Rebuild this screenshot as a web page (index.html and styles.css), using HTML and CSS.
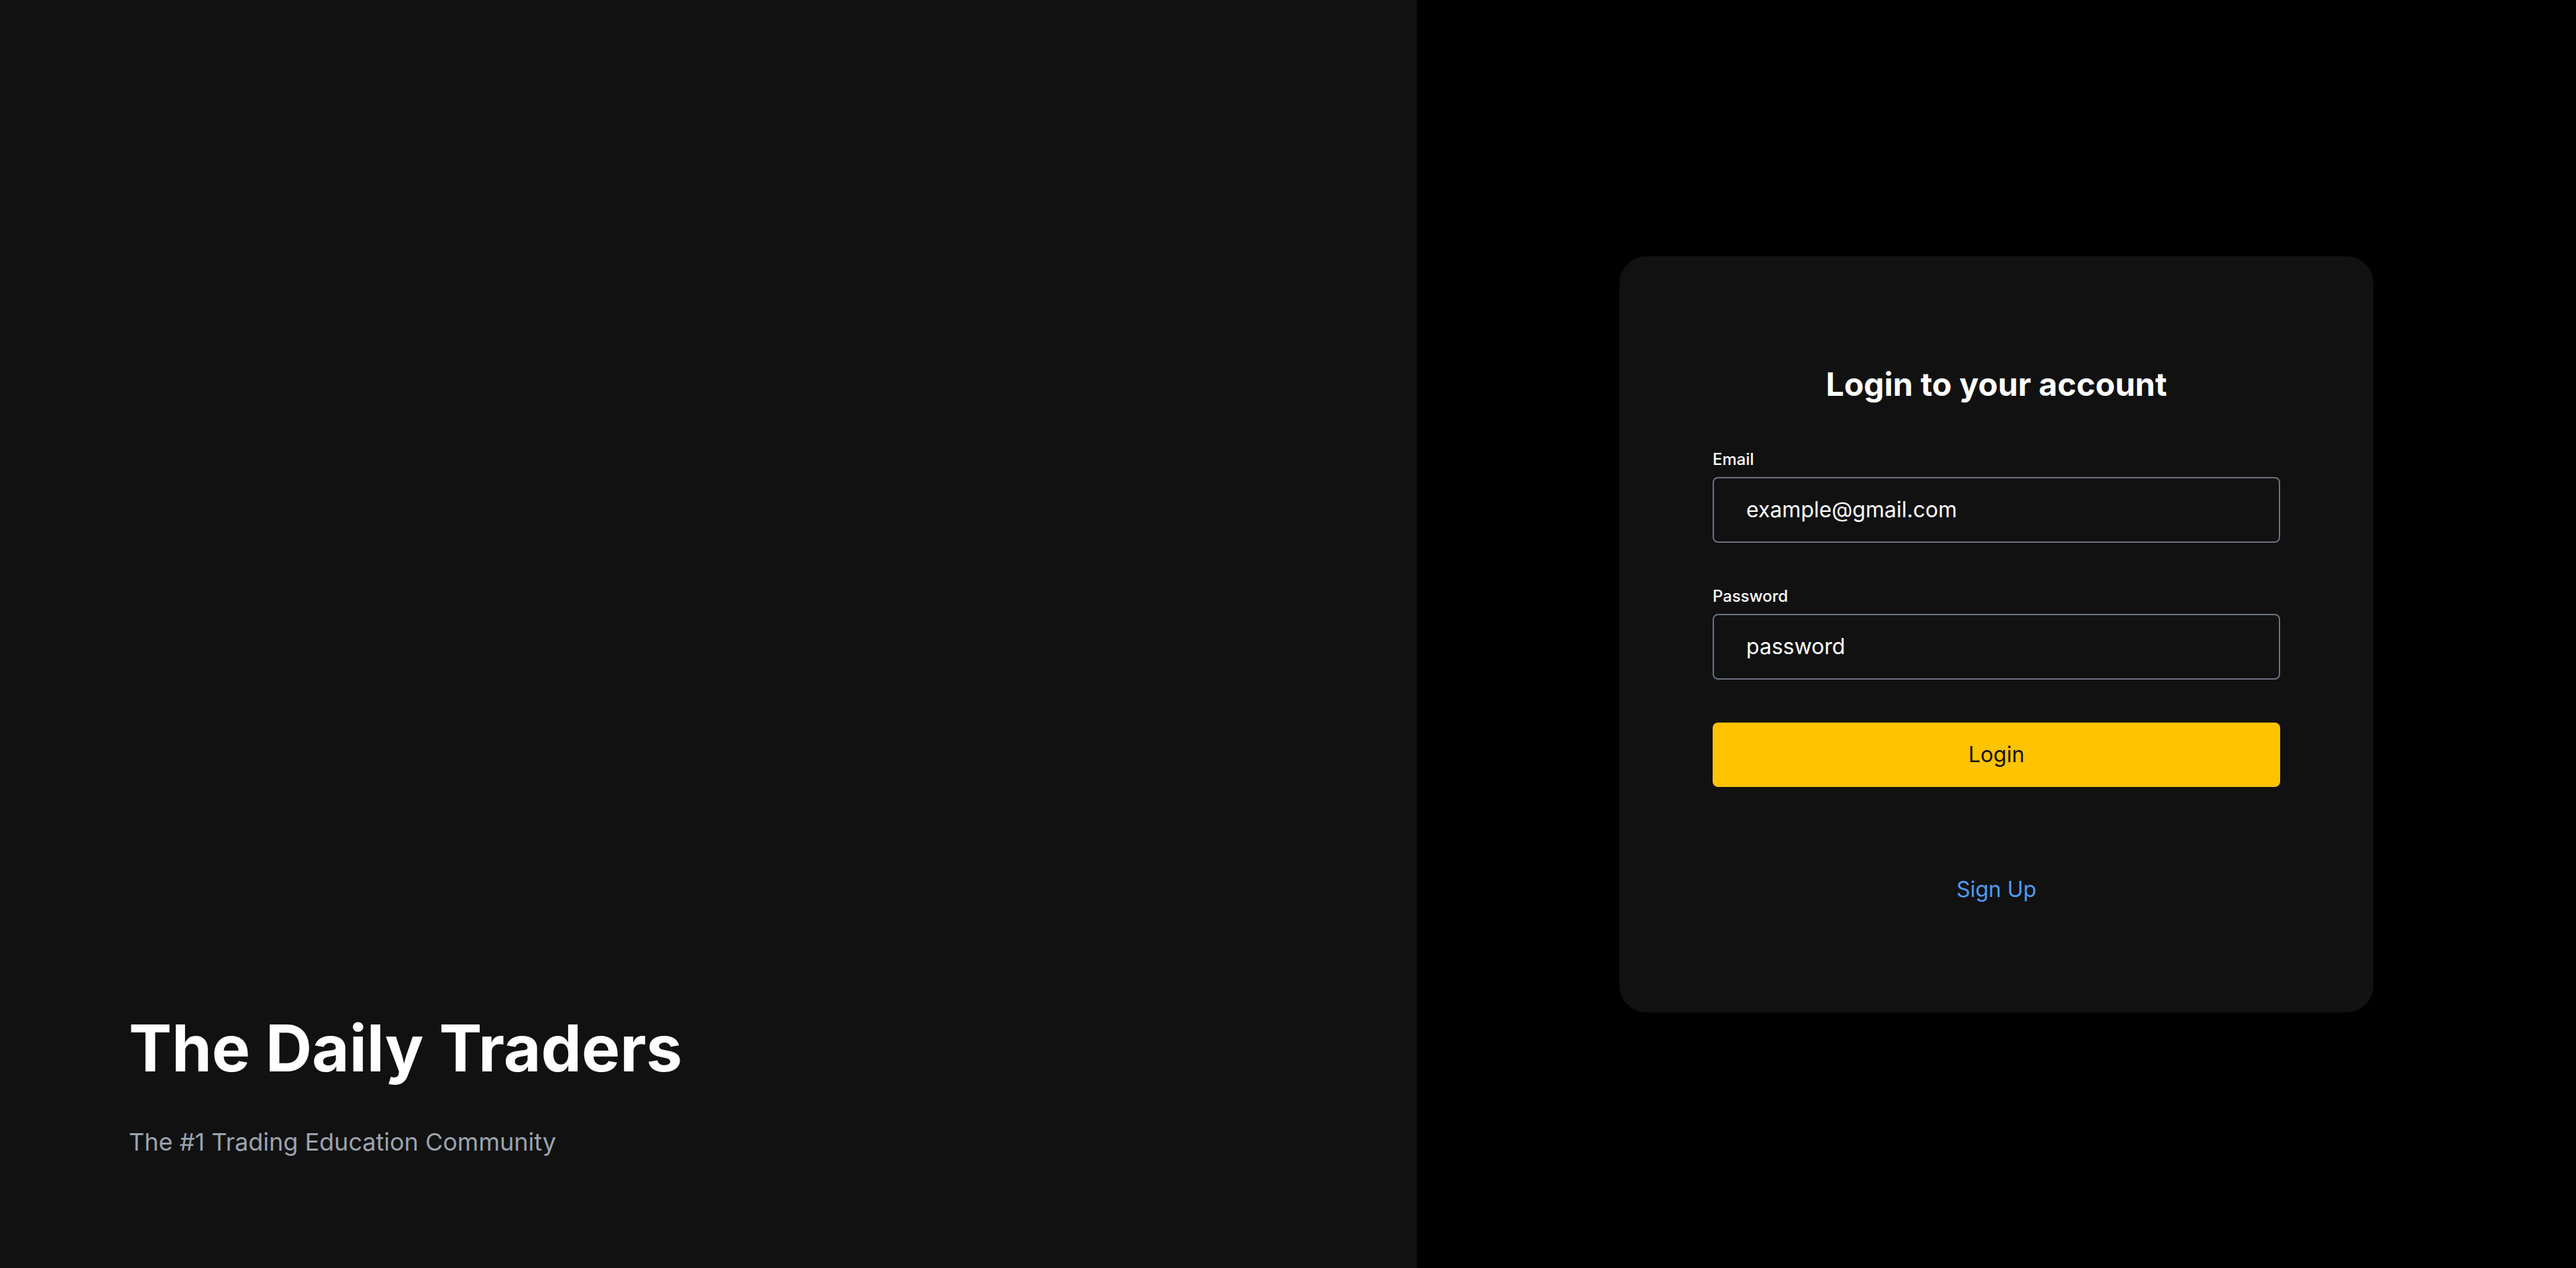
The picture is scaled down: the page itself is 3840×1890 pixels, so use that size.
FILE: index.html
```html
<!DOCTYPE html>
<html lang="en">
<head>
<meta charset="utf-8">
<title>The Daily Traders - Login</title>
<link rel="stylesheet" href="styles.css">
</head>
<body>
<div class="page">
  <section class="brand">
    <h1 class="brand-title">The Daily Traders</h1>
    <p class="brand-sub">The #1 Trading Education Community</p>
  </section>
  <section class="auth">
    <div class="card">
      <h2 class="card-title">Login to your account</h2>
      <form class="form">
        <div class="field">
          <label class="label" for="email">Email</label>
          <input class="input" id="email" type="text" value="example@gmail.com">
        </div>
        <div class="field">
          <label class="label" for="password">Password</label>
          <input class="input" id="password" type="text" value="password">
        </div>
        <button class="btn" type="button">Login</button>
      </form>
      <a class="signup" href="#">Sign Up</a>
    </div>
  </section>
</div>
</body>
</html>
```

FILE: styles.css
```css
* { box-sizing: border-box; }
html, body {
  margin: 0;
  padding: 0;
  height: 100%;
}
body {
  font-family: "Inter", "Noto Sans", sans-serif;
  background: #000;
  color: #fff;
}
.page {
  display: flex;
  height: 100vh;
}
.brand {
  width: 2112px;
  flex: 0 0 2112px;
  background: #111111;
  display: flex;
  flex-direction: column;
  justify-content: flex-end;
  padding: 0 192px 160px;
}
.brand-title {
  margin: 0;
  font-size: 96px;
  line-height: 96px;
  font-weight: 700;
  color: #fff;
  letter-spacing: 0;
}
.brand-sub {
  margin: 64px 0 0;
  font-size: 36px;
  line-height: 56px;
  color: #9ca3af;
}
.auth {
  flex: 1;
  background: #000;
  display: flex;
  align-items: center;
  justify-content: center;
}
.card {
  width: 1124px;
  background: #111111;
  border-radius: 40px;
  padding: 159px 139px 159px;
  display: flex;
  flex-direction: column;
  align-items: center;
}
.card-title {
  margin: 0 0 64px;
  font-size: 48px;
  line-height: 64px;
  font-weight: 700;
  text-align: center;
}
.form {
  width: 100%;
  display: flex;
  flex-direction: column;
}
.field {
  display: flex;
  flex-direction: column;
  margin-bottom: 64px;
}
.label {
  font-size: 24px;
  line-height: 32px;
  font-weight: 500;
  margin-bottom: 10px;
  color: #fff;
}
.input {
  height: 98px;
  width: 100%;
  background: #111111;
  border: 2px solid #6b7280;
  border-radius: 8px;
  padding: 0 48px;
  font-family: inherit;
  font-size: 32px;
  color: #fff;
  outline: none;
}
.btn {
  height: 96px;
  width: 100%;
  background: #ffc300;
  border: none;
  border-radius: 8px;
  font-family: inherit;
  font-size: 32px;
  color: #111;
  cursor: pointer;
}
.signup {
  margin-top: 129px;
  font-size: 32px;
  line-height: 48px;
  color: #4f9cf7;
  text-decoration: none;
}
```
